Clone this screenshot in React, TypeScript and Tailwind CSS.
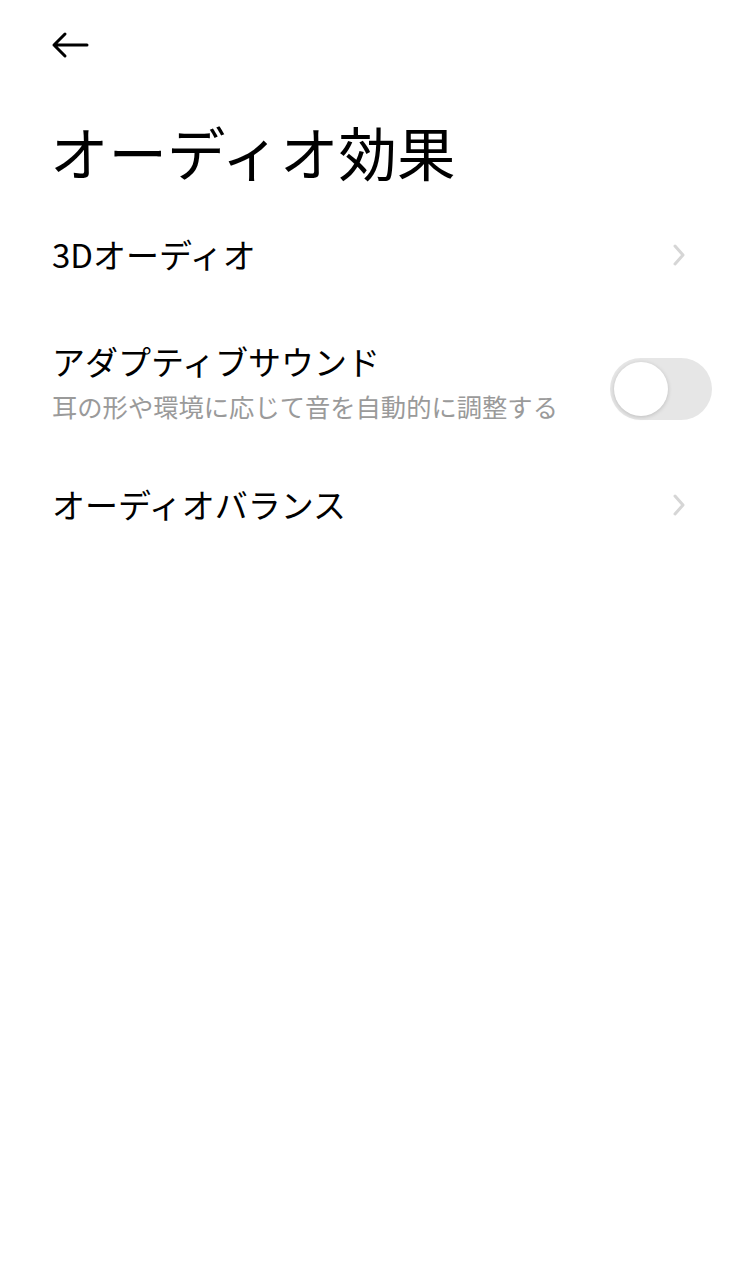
import { useState } from "react";

const FONT = { fontFamily: '"Noto Sans CJK JP", "Noto Sans", sans-serif' };

function Chevron() {
    return (
        <svg className="w-[18px] h-[24px] text-[#d6d6d6] shrink-0" fill="none" stroke="currentColor" viewBox="0 0 18 24">
            <path strokeLinecap="round" strokeLinejoin="round" strokeWidth={3} d="M5 3l8 9-8 9" />
        </svg>
    );
}

function Toggle({ on, onChange }: { on: boolean; onChange: () => void }) {
    return (
        <button
            onClick={onChange}
            className={`relative w-[102px] h-[62px] rounded-full shrink-0 transition-colors ${on ? "bg-[#0d84ff]" : "bg-[#e6e6e6]"}`}
        >
            <span
                className={`absolute top-[4px] w-[54px] h-[54px] rounded-full bg-white shadow-[0_1px_4px_rgba(0,0,0,0.18)] transition-all ${on ? "left-[44px]" : "left-[4px]"}`}
            />
        </button>
    );
}

export default function App() {
    const [adaptive, setAdaptive] = useState(false);

    return (
        <div className="w-[750px] min-h-[1286px] bg-white text-black" style={FONT}>
            {/* Header */}
            <div className="h-[90px] flex items-center pl-[50px]">
                <svg className="w-[40px] h-[30px]" fill="none" stroke="currentColor" viewBox="0 0 40 30">
                    <path strokeLinecap="round" strokeLinejoin="round" strokeWidth={3} d="M37 15H4M15 4L4 15l11 11" />
                </svg>
            </div>

            <h1 className="mt-[27px] px-[50px] text-[58.5px] leading-[68px] font-normal">オーディオ効果</h1>

            <div className="mt-[20px]">
                {/* 3D audio */}
                <div className="h-[100px] flex items-center pl-[52px] pr-[62px]">
                    <span className="flex-1 text-[33px] leading-[42px] -mt-[3px]">3Dオーディオ</span>
                    <Chevron />
                </div>

                {/* Adaptive sound */}
                <div className="h-[150px] flex items-center pl-[52px] pr-[38px]">
                    <div className="flex-1 min-w-0 pt-[4px]">
                        <div className="text-[33px] leading-[42px]">アダプティブサウンド</div>
                        <div className="mt-[5px] text-[25.3px] leading-[38px] text-[#9a9a9a]">耳の形や環境に応じて音を自動的に調整する</div>
                    </div>
                    <div className="pt-[22px]">
                        <Toggle on={adaptive} onChange={() => setAdaptive(!adaptive)} />
                    </div>
                </div>

                {/* Audio balance */}
                <div className="h-[100px] flex items-center pl-[52px] pr-[62px]">
                    <span className="flex-1 text-[33px] leading-[42px] -mt-[3px]">オーディオバランス</span>
                    <Chevron />
                </div>
            </div>
        </div>
    );
}
